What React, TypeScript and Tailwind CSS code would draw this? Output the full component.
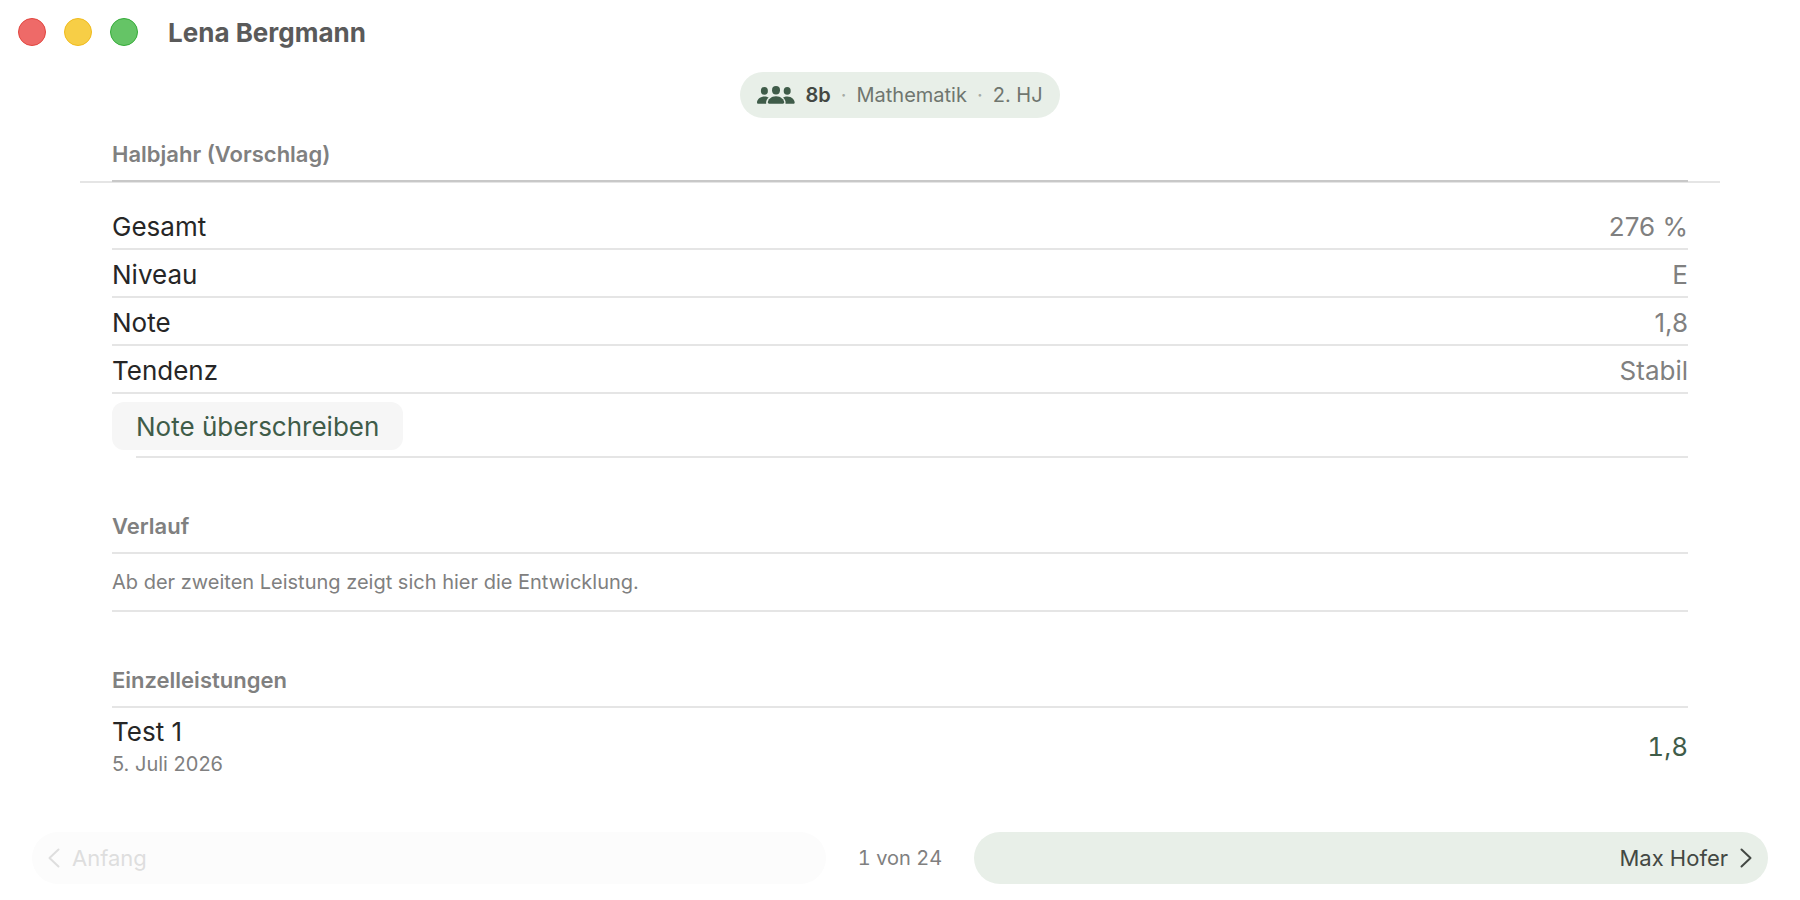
import React from "react";

const summary = [
  { label: "Gesamt", value: "276 %" },
  { label: "Niveau", value: "E" },
  { label: "Note", value: "1,8" },
  { label: "Tendenz", value: "Stabil" },
];

const results = [{ title: "Test 1", date: "5. Juli 2026", grade: "1,8" }];

const GroupIcon = () => (
  <svg width="38" height="18" viewBox="0 0 38 18" fill="#3f5c49" aria-hidden="true">
    <ellipse cx="19" cy="4.2" rx="4" ry="4.2" />
    <ellipse cx="7.4" cy="4.9" rx="3.5" ry="3.8" />
    <ellipse cx="30.2" cy="4.9" rx="3.5" ry="3.8" />
    <path d="M12.2 17.7c-.9 0-1.4-.5-1.4-1.2 0-2.700 3.200-6.300 8.200-6.300s8.200 3.600 8.200 6.300c0 .7-.5 1.200-1.400 1.200z" />
    <path d="M1.400 17.700C.5 17.700 0 17.200 0 16.400c0-2.600 2.900-6 7.400-6 1.700 0 3.200.5 4.300 1.200-1.700 1.400-3 3.800-2.500 6.100z" />
    <path d="M36.300 17.700c.9 0 1.400-.5 1.400-1.300 0-2.600-2.900-6-7.400-6-1.700 0-3.200.5-4.300 1.200 1.700 1.400 3 3.800 2.500 6.100z" />
  </svg>
);

const Chevron = ({ direction }: { direction: "left" | "right" }) => (
  <svg width="12" height="20" viewBox="0 0 12 20" fill="none" stroke="currentColor" strokeWidth="2" strokeLinecap="round" strokeLinejoin="round" aria-hidden="true">
    <path d={direction === "left" ? "M10.500 1.500 1.500 10l9 8.500" : "M1.500 1.500 10.500 10l-9 8.500"} />
  </svg>
);

const SectionTitle = ({ children }: { children: React.ReactNode }) => (
  <h2 className="border-b-2 border-[#e5e5e5] pt-[52px] pb-[10px] text-[22px] leading-8 font-semibold text-[#808080]">
    {children}
  </h2>
);

export default function App() {
  return (
    <div className="flex min-h-screen flex-col bg-white font-['Inter',sans-serif] text-[#262626]">
      <header>
        <div className="flex h-16 items-center px-[18px]">
          <div className="flex gap-[18px]">
            <button type="button" aria-label="Schließen" className="size-7 rounded-full border border-[#e2463f] bg-[#ee6a68]" />
            <button type="button" aria-label="Minimieren" className="size-7 rounded-full border border-[#f0bb1d] bg-[#f7ce46]" />
            <button type="button" aria-label="Vergrößern" className="size-7 rounded-full border border-[#35ac39] bg-[#65c466]" />
          </div>
          <h1 className="ml-[30px] pt-0.5 text-[26px] leading-8 font-bold text-[#5a5a5a]">Lena Bergmann</h1>
        </div>
        <div className="flex justify-center pt-2">
          <div className="flex h-[46px] items-center rounded-full bg-[#e8efe8] px-[17px] text-xl text-[#6f766f]">
            <GroupIcon />
            <span className="ml-2.5 font-semibold text-[#434843]">8b</span>
            <span className="mx-2.5 text-[#a5aba5]">·</span>
            <span>Mathematik</span>
            <span className="mx-2.5 text-[#a5aba5]">·</span>
            <span>2. HJ</span>
          </div>
        </div>
      </header>

      <main className="flex-1 px-20">
        {/* the title's own rule overlaps the full-width one by a pixel */}
        <div className="border-b-2 border-[#e5e5e5] px-8">
          <h2 className="-mb-px border-b-2 border-[#c8c8c8] pt-5 pb-[10px] text-[22px] leading-8 font-semibold text-[#808080]">
            Halbjahr (Vorschlag)
          </h2>
        </div>

        <div className="px-8">
          <section className="pt-[19px]">
            <dl className="text-[26px] leading-[42px]">
              {summary.map((row) => (
                <div key={row.label} className="flex justify-between border-b-2 border-[#e5e5e5] pt-1">
                  <dt>{row.label}</dt>
                  <dd className="text-[#808080]">{row.value}</dd>
                </div>
              ))}
            </dl>
            <button type="button" className="mt-2 block h-12 rounded-xl bg-[#f6f6f6] px-6 text-[26px] text-[#3f5c49]">
              Note überschreiben
            </button>
            <div className="mt-1.5 ml-6 border-b-2 border-[#e5e5e5]" />
          </section>

          <section>
            <SectionTitle>Verlauf</SectionTitle>
            <p className="border-b-2 border-[#e5e5e5] py-3 text-xl leading-8 text-[#808080]">
              Ab der zweiten Leistung zeigt sich hier die Entwicklung.
            </p>
          </section>

          <section>
            <SectionTitle>Einzelleistungen</SectionTitle>
            <ul>
              {results.map((result) => (
                <li key={result.title} className="flex items-center justify-between pt-1.5 text-[26px]">
                  <div>
                    <p className="leading-9">{result.title}</p>
                    <p className="text-xl leading-7 text-[#808080]">{result.date}</p>
                  </div>
                  <span className="text-[#3f5c49] tabular-nums">{result.grade}</span>
                </li>
              ))}
            </ul>
          </section>
        </div>
      </main>

      <footer className="flex items-center px-8 pb-4">
        <button type="button" disabled className="flex h-[52px] flex-1 items-center gap-3 rounded-full bg-[#fcfcfc] px-4 text-[22px] text-[#dedede]">
          <Chevron direction="left" />
          Anfang
        </button>
        <span className="px-8 text-xl text-[#808080] tabular-nums">1 von 24</span>
        <button type="button" className="flex h-[52px] flex-1 items-center justify-end gap-3 rounded-full bg-[#e8efe8] px-4 text-[22px] text-[#434843]">
          Max Hofer
          <Chevron direction="right" />
        </button>
      </footer>
    </div>
  );
}
